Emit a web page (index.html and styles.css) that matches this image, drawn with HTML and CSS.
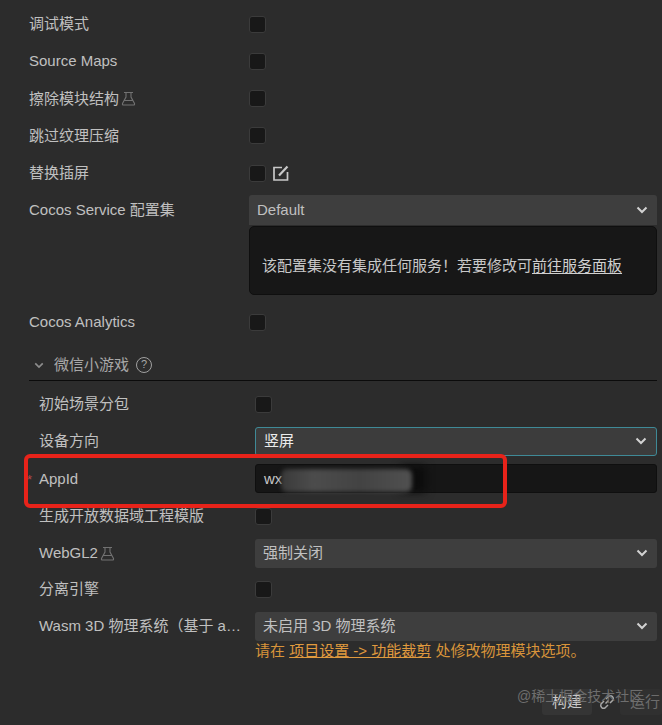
FILE: index.html
```html
<!DOCTYPE html>
<html lang="zh">
<head>
<meta charset="utf-8">
<title>构建</title>
<link rel="stylesheet" href="styles.css">
</head>
<body>
<svg class="sprite" width="0" height="0" aria-hidden="true">
  <symbol id="flask" viewBox="0 0 15 15"><path d="M3 1.500h9M5 1.500v4.500L1.500 12.500q-.4 1.500 1 1.500h10q1.400 0 1-1.500L10 6V1.500M3.500 9.500h8" fill="none" stroke="currentColor" stroke-width="1.100"/></symbol>
  <symbol id="chev" viewBox="0 0 12 8"><path d="M1.500 1.500 6 6l4.500-4.500" fill="none" stroke="currentColor" stroke-width="2"/></symbol>
</svg>
<main class="panel">
  <div class="row"><span class="label">调试模式</span><span class="check"></span></div>
  <div class="row"><span class="label">Source Maps</span><span class="check"></span></div>
  <div class="row"><span class="label">擦除模块结构<svg class="flask"><use href="#flask"/></svg></span><span class="check"></span></div>
  <div class="row"><span class="label">跳过纹理压缩</span><span class="check"></span></div>
  <div class="row"><span class="label">替换插屏</span><span class="check"></span>
    <svg class="edit" viewBox="0 0 16 16"><path d="M9 2.500H1v12.500h13.500V7" fill="none" stroke="currentColor" stroke-width="1.700"/><path d="M6 10.500 14.500 1.500" fill="none" stroke="currentColor" stroke-width="2.200"/></svg>
  </div>
  <div class="row row-service"><span class="label">Cocos Service 配置集</span><div class="select">Default<svg class="chev"><use href="#chev"/></svg></div></div>
  <div class="service-box">该配置集没有集成任何服务！若要修改可<a class="link">前往服务面板</a></div>
  <div class="row row-analytics"><span class="label">Cocos Analytics</span><span class="check"></span></div>

  <div class="section-head">
    <svg class="chev chev-section"><use href="#chev"/></svg>
    <span>微信小游戏</span>
    <span class="help">?</span>
  </div>

  <section class="section">
    <div class="row"><span class="label">初始场景分包</span><span class="check"></span></div>
    <div class="row"><span class="label">设备方向</span><div class="select select-focus">竖屏<svg class="chev"><use href="#chev"/></svg></div></div>
    <div class="row row-appid"><span class="label label-req">AppId</span><div class="input">wx</div></div>
    <div class="row"><span class="label">生成开放数据域工程模版</span><span class="check"></span></div>
    <div class="row row-tight"><span class="label">WebGL2<svg class="flask"><use href="#flask"/></svg></span><div class="select">强制关闭<svg class="chev"><use href="#chev"/></svg></div></div>
    <div class="row"><span class="label">分离引擎</span><span class="check"></span></div>
    <div class="row row-wasm"><span class="label">Wasm 3D 物理系统（基于 a…</span><div class="select">未启用 3D 物理系统<svg class="chev"><use href="#chev"/></svg></div></div>
    <p class="hint">请在 <a class="hint-link">项目设置 -&gt; 功能裁剪</a> 处修改物理模块选项。</p>
  </section>

  <footer class="footer">
    <span class="btn">构建</span>
    <svg class="chain" viewBox="0 0 18 18"><path d="M7.500 10.500 10.500 7.500M6 8 3 11a3 3 0 0 0 4 4l3-3M12 10l3-3a3 3 0 0 0-4-4L8 6" fill="none" stroke="currentColor" stroke-width="1.500"/></svg>
    <span class="btn btn-off">运行</span>
  </footer>
</main>
<div class="smudge-shadow"></div>
<div class="smudge"></div>
<div class="highlight"></div>
<div class="watermark">@稀土掘金技术社区</div>
</body>
</html>
```
FILE: styles.css
```css
* { box-sizing: border-box; }
html, body { height: 100%; }
body {
  margin: 0;
  background: #2c2c2c;
  color: #c0c0c0;
  font: 15px/20px "Liberation Sans", "Noto Sans CJK SC", sans-serif;
  overflow: hidden;
  position: relative;
}
.sprite { position: absolute; }
.panel { padding: 10px 5px 0 29px; }
.row {
  display: flex;
  align-items: center;
  height: 28px;
  margin-bottom: 9.3px;
}
.label {
  flex: 0 0 220px;
  display: flex;
  align-items: center;
  white-space: nowrap;
}
.check {
  width: 17px;
  height: 17px;
  background: #181818;
  border: 1px solid #3b3b3b;
  border-radius: 3px;
}
.flask { width: 15px; height: 15px; margin-left: 2px; color: #727272; }
.edit { width: 16px; height: 16px; margin-left: 7px; color: #c8c8c8; }
.select {
  flex: 1;
  height: 30px;
  display: flex;
  align-items: center;
  justify-content: space-between;
  padding: 0 9px 0 8px;
  background: #3e3e3e;
  border-radius: 3px 3px 0 0;
}
.chev { width: 12px; height: 8px; color: #d2d2d2; }
.row-service { margin: -1px 0 0; height: 30px; }
.service-box {
  margin: 1px 0 0 220px;
  height: 69px;
  padding: 29px 0 0 12px;
  background: #171717;
  border: 1px solid #0f0f0f;
  border-radius: 5px;
  color: #c8c8c8;
}
.link { color: #d0d0d0; text-decoration: underline; text-underline-offset: 2px; }
.row-analytics { margin: 13px 0 0; }
.section-head {
  display: flex;
  align-items: center;
  height: 38px;
  margin-top: 7px;
  padding: 7px 0 0 5px;
  border-bottom: 1px solid #0b0b0b;
  color: #a8a8a8;
}
.chev-section { width: 10px; height: 7px; margin-right: 10px; color: #8d8d8d; }
.help {
  width: 16px;
  height: 16px;
  margin-left: 7px;
  border: 1.500px solid #a0a0a0;
  border-radius: 50%;
  font-size: 11px;
  line-height: 13px;
  text-align: center;
}
.section { padding: 9px 0 0 10px; }
.section .row { margin-bottom: 9px; }
.section .label { flex-basis: 216px; }
.section .select { border-radius: 3px; height: 29px; }
.section .row-tight { margin-bottom: 8px; }
.select-focus {
  background: #3c3c3c;
  border: 1px solid #3f8a97;
  color: #ececec;
}
.section .row-appid { margin-top: 1px; height: 29px; }
.label-req { position: relative; }
.label-req::before {
  content: "*";
  position: absolute;
  left: -12px;
  top: 1px;
  color: #b04a4a;
  font-size: 13px;
}
.input {
  flex: 1;
  height: 29px;
  padding: 4px 8px;
  background: #161616;
  border: 1px solid #0f0f0f;
  border-radius: 3px;
  color: #c8c8c8;
}
.section .row-wasm { margin-bottom: 0; }
.hint { margin: 0 0 0 216px; height: 24px; line-height: 22px; color: #d8943a; white-space: nowrap; }
.hint-link { color: #e09a3e; text-decoration: underline; }
.footer {
  display: flex;
  align-items: center;
  justify-content: flex-end;
  height: 26px;
  margin: 25px -5px 0 0;
}
.btn {
  width: 50px;
  height: 26px;
  text-align: center;
  line-height: 26px;
  background: #353535;
  border-radius: 3px;
  color: #c9c9c9;
}
.chain { width: 18px; height: 18px; margin: 0 4px 0 6px; color: #a8a8a8; flex: none; }
.btn-off { width: 42px; background: #303030; color: #6c6c6c; text-align: left; padding-left: 10px; white-space: nowrap; overflow: hidden; }
.smudge-shadow {
  position: absolute;
  left: 400px;
  top: 466px;
  width: 26px;
  height: 26px;
  background: #0c0c0c;
  filter: blur(4px);
}
.smudge {
  position: absolute;
  left: 281px;
  top: 469px;
  width: 131px;
  height: 23px;
  background: linear-gradient(90deg, #3a3a3a, #4c4c4c 25%, #434343 60%, #505050);
  filter: blur(2px);
  border-radius: 6px;
}
.highlight {
  position: absolute;
  left: 24px;
  top: 454px;
  width: 483px;
  height: 54px;
  border: 4px solid #e8231a;
  border-radius: 6px;
}
.watermark {
  position: absolute;
  left: 517px;
  top: 686px;
  font-size: 14px;
  color: #6e6e6e;
  white-space: nowrap;
}
```
